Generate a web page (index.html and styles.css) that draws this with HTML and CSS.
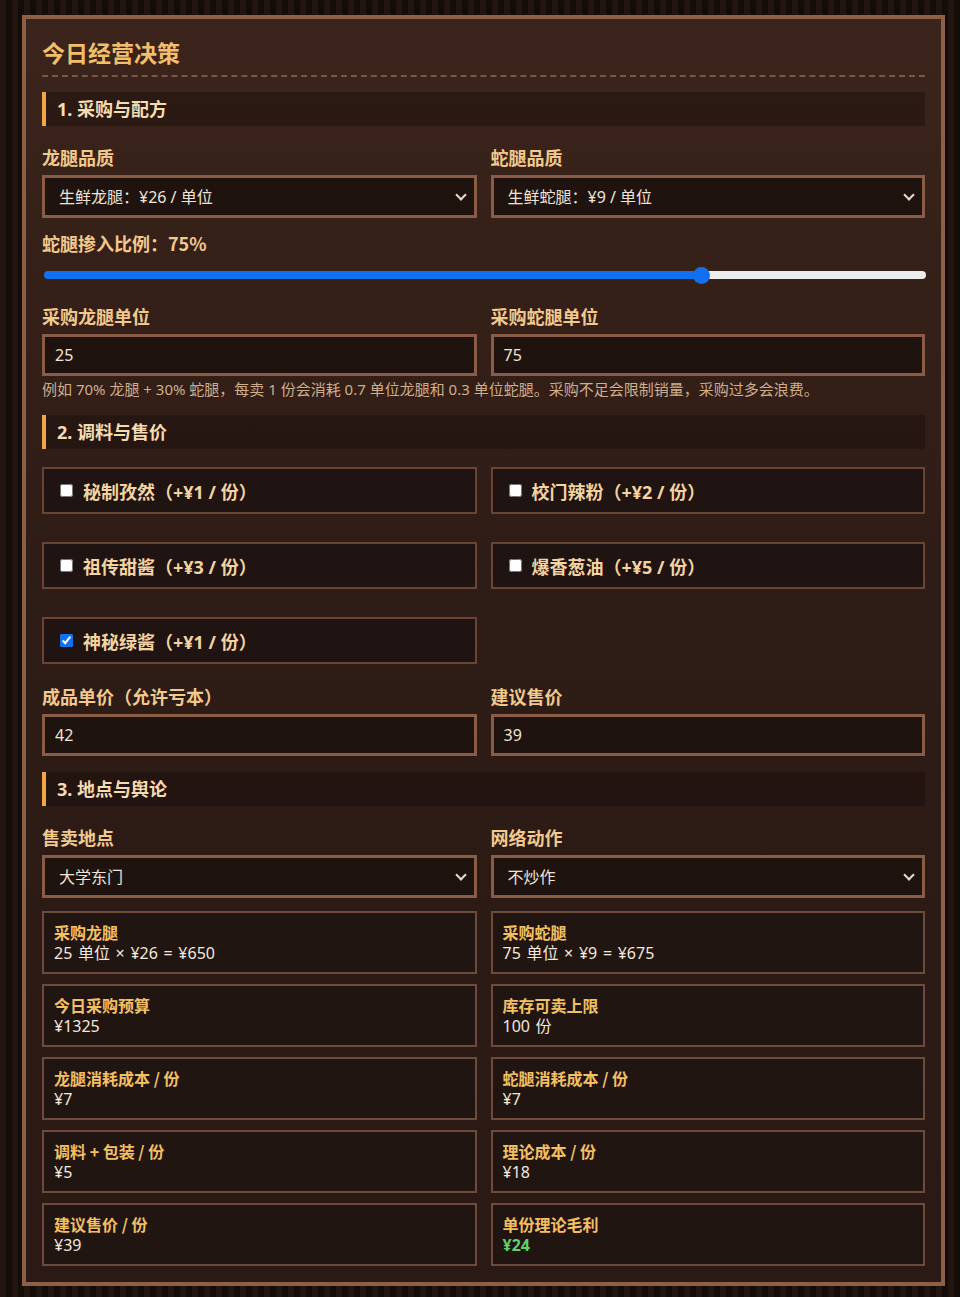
FILE: index.html
```html
<!DOCTYPE html>
<html lang="zh-CN">
<head>
<meta charset="utf-8">
<title>今日经营决策</title>
<link rel="stylesheet" href="styles.css">
</head>
<body>
<div class="panel">
  <h2 class="title">今日经营决策</h2>

  <div class="section-head first">1. 采购与配方</div>
  <div class="grid2 after-head">
    <div class="field">
      <label class="label">龙腿品质</label>
      <div class="select-wrap"><select class="select"><option>生鲜龙腿：¥26 / 单位</option></select></div>
    </div>
    <div class="field">
      <label class="label">蛇腿品质</label>
      <div class="select-wrap"><select class="select"><option>生鲜蛇腿：¥9 / 单位</option></select></div>
    </div>
  </div>
  <label class="label slider-label">蛇腿掺入比例：75%</label>
  <input class="range" type="range" min="0" max="100" value="75" style="--pct:75%">
  <div class="grid2 after-range">
    <div class="field">
      <label class="label">采购龙腿单位</label>
      <input class="input" type="text" value="25">
    </div>
    <div class="field">
      <label class="label">采购蛇腿单位</label>
      <input class="input" type="text" value="75">
    </div>
  </div>
  <p class="hint">例如 70% 龙腿 + 30% 蛇腿，每卖 1 份会消耗 0.7 单位龙腿和 0.3 单位蛇腿。采购不足会限制销量，采购过多会浪费。</p>

  <div class="section-head">2. 调料与售价</div>
  <div class="grid2 checks">
    <label class="check"><input type="checkbox"><span>秘制孜然（+¥1 / 份）</span></label>
    <label class="check"><input type="checkbox"><span>校门辣粉（+¥2 / 份）</span></label>
    <label class="check"><input type="checkbox"><span>祖传甜酱（+¥3 / 份）</span></label>
    <label class="check"><input type="checkbox"><span>爆香葱油（+¥5 / 份）</span></label>
    <label class="check"><input type="checkbox" checked><span>神秘绿酱（+¥1 / 份）</span></label>
  </div>
  <div class="grid2 after-checks">
    <div class="field">
      <label class="label">成品单价（允许亏本）</label>
      <input class="input" type="text" value="42">
    </div>
    <div class="field">
      <label class="label">建议售价</label>
      <input class="input" type="text" value="39">
    </div>
  </div>

  <div class="section-head">3. 地点与舆论</div>
  <div class="grid2 after-head">
    <div class="field">
      <label class="label">售卖地点</label>
      <div class="select-wrap"><select class="select"><option>大学东门</option></select></div>
    </div>
    <div class="field">
      <label class="label">网络动作</label>
      <div class="select-wrap"><select class="select"><option>不炒作</option></select></div>
    </div>
  </div>

  <div class="grid2 cards">
    <div class="card"><div class="card-label">采购龙腿</div><div class="card-value">25 单位 × ¥26 = ¥650</div></div>
    <div class="card"><div class="card-label">采购蛇腿</div><div class="card-value">75 单位 × ¥9 = ¥675</div></div>
    <div class="card"><div class="card-label">今日采购预算</div><div class="card-value">¥1325</div></div>
    <div class="card"><div class="card-label">库存可卖上限</div><div class="card-value">100 份</div></div>
    <div class="card"><div class="card-label">龙腿消耗成本 / 份</div><div class="card-value">¥7</div></div>
    <div class="card"><div class="card-label">蛇腿消耗成本 / 份</div><div class="card-value">¥7</div></div>
    <div class="card"><div class="card-label">调料 + 包装 / 份</div><div class="card-value">¥5</div></div>
    <div class="card"><div class="card-label">理论成本 / 份</div><div class="card-value">¥18</div></div>
    <div class="card"><div class="card-label">建议售价 / 份</div><div class="card-value">¥39</div></div>
    <div class="card"><div class="card-label">单份理论毛利</div><div class="card-value good">¥24</div></div>
  </div>
</div>
</body>
</html>
```
FILE: styles.css
```css
* { box-sizing: border-box; }

html, body {
  margin: 0;
  padding: 0;
}

body {
  background-color: #140c09;
  background-image: repeating-linear-gradient(90deg, rgba(60,38,28,0.35) 0 6px, rgba(20,12,9,0) 6px 12px);
  font-family: "Noto Sans", "Noto Sans CJK SC", "Liberation Sans", sans-serif;
  color: #f0e4d6;
  padding: 15px 15px 10px 22px;
  min-height: 1297px;
}

.panel {
  width: 923px;
  border: 4px solid #8d5f44;
  background: linear-gradient(180deg, #3b241b 0%, #2e1c16 45%, #2a1914 100%);
  padding: 17px 16px 16px 16px;
}

.title {
  margin: 0;
  font-size: 23px;
  line-height: 32px;
  font-weight: 700;
  color: #f3be6a;
  padding-bottom: 7px;
  border-bottom: 2px dashed #7a5848;
  font-family: "Noto Sans CJK SC", sans-serif;
}

.section-head {
  margin-top: 16px;
  height: 34px;
  line-height: 34px;
  padding-left: 11px;
  border-left: 4px solid #f2a646;
  background: rgba(18, 10, 8, 0.35);
  font-size: 18px;
  font-weight: 700;
  color: #f5dcb0;
}

.section-head.first { margin-top: 15px; }

.grid2 {
  display: grid;
  grid-template-columns: 1fr 1fr;
  column-gap: 14px;
}

.after-head { margin-top: 19px; }
.after-range { margin-top: 25px; }
.after-checks { margin-top: 20px; }

.field {
  display: flex;
  flex-direction: column;
}

.label {
  display: block;
  font-size: 18px;
  line-height: 24px;
  font-weight: 700;
  color: #f2c98c;
  margin-bottom: 6px;
  font-family: "Noto Sans CJK SC", sans-serif;
}

.slider-label {
  margin-top: 13px;
  margin-bottom: 0;
}

.select-wrap {
  position: relative;
}

.select-wrap::after {
  content: "";
  position: absolute;
  right: 12px;
  top: 16px;
  width: 6px;
  height: 6px;
  border-right: 2px solid #e8dccf;
  border-bottom: 2px solid #e8dccf;
  transform: rotate(45deg);
  pointer-events: none;
}

.select, .input {
  display: block;
  width: 100%;
  height: 43px;
  border: 3px solid #8b5c45;
  background: #1f1310;
  color: #f0e4d6;
  font-family: "Noto Sans", "Noto Sans CJK SC", sans-serif;
  font-size: 16px;
  outline: none;
  border-radius: 0;
  margin: 0;
}

.select {
  appearance: none;
  -webkit-appearance: none;
  padding: 0 30px 0 14px;
}

.input {
  height: 42px;
  padding: 0 10px;
}

.range {
  -webkit-appearance: none;
  appearance: none;
  display: block;
  width: 882px;
  margin: 16px 0 0 2px;
  height: 8px;
  padding: 0;
  background: transparent;
}

.range::-webkit-slider-runnable-track {
  height: 8px;
  border-radius: 4px;
  background: linear-gradient(90deg, #1170f0 0, #1170f0 var(--pct), #ececec var(--pct), #ececec 100%);
}

.range::-webkit-slider-thumb {
  -webkit-appearance: none;
  appearance: none;
  width: 17px;
  height: 17px;
  border-radius: 50%;
  background: #1170f0;
  margin-top: -4.5px;
  border: none;
}

.hint {
  margin: 3px 0 0 0;
  font-size: 15px;
  line-height: 20px;
  color: #cfae8c;
}

.checks {
  margin-top: 18px;
  row-gap: 28px;
}

.check {
  display: flex;
  align-items: center;
  height: 47px;
  border: 2px solid #6c4434;
  background: #1f1411;
  padding-left: 16px;
  font-size: 18px;
  font-weight: 700;
  color: #f3d3a0;
  cursor: pointer;
}

.check input {
  width: 13px;
  height: 13px;
  margin: 0 10px 0 0;
  accent-color: #1170f0;
}

.cards {
  margin-top: 13px;
  row-gap: 10px;
}

.card {
  border: 2px solid #6e4a3b;
  background: #211512;
  padding: 9px 10px 8px;
}

.card-label {
  font-size: 16px;
  line-height: 21px;
  font-weight: 700;
  color: #f2c062;
  font-family: "Noto Sans CJK SC", sans-serif;
}

.card-value {
  font-size: 16px;
  line-height: 21px;
  color: #f2e8dc;
  word-spacing: 1.5px;
}

.card-value.good {
  color: #5fd36a;
  font-weight: 700;
}
```
